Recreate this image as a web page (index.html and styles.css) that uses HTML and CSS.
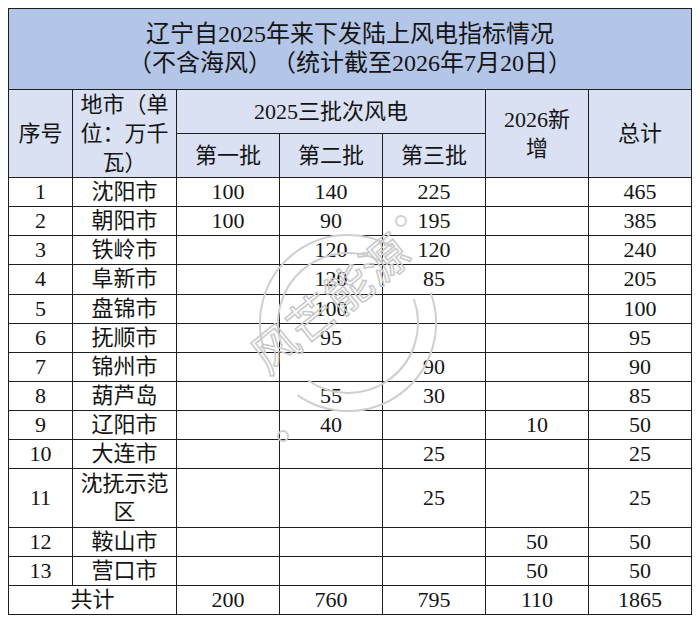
FILE: index.html
```html
<!DOCTYPE html>
<html lang="zh-CN">
<head>
<meta charset="utf-8">
<title>辽宁自2025年来下发陆上风电指标情况</title>
<link rel="stylesheet" href="styles.css">
</head>
<body>
<div class="wrap">
<table class="tbl">
<colgroup>
<col class="c-no"><col class="c-city"><col class="c-n"><col class="c-n"><col class="c-n"><col class="c-n"><col class="c-n">
</colgroup>
<thead>
<tr class="r-title"><th colspan="7" class="title">辽宁自2025年来下发陆上风电指标情况<br>（不含海风）（统计截至2026年7月20日）</th></tr>
<tr class="r-h1">
<th rowspan="2" class="hd">序号</th>
<th rowspan="2" class="hd">地市（单位：万千瓦）</th>
<th colspan="3" class="hd">2025三批次风电</th>
<th rowspan="2" class="hd">2026新<br>增</th>
<th rowspan="2" class="hd">总计</th>
</tr>
<tr class="r-h2">
<th class="hd">第一批</th><th class="hd">第二批</th><th class="hd">第三批</th>
</tr>
</thead>
<tbody>
<tr><td>1</td><td>沈阳市</td><td>100</td><td>140</td><td>225</td><td></td><td>465</td></tr>
<tr><td>2</td><td>朝阳市</td><td>100</td><td>90</td><td>195</td><td></td><td>385</td></tr>
<tr><td>3</td><td>铁岭市</td><td></td><td>120</td><td>120</td><td></td><td>240</td></tr>
<tr><td>4</td><td>阜新市</td><td></td><td>120</td><td>85</td><td></td><td>205</td></tr>
<tr><td>5</td><td>盘锦市</td><td></td><td>100</td><td></td><td></td><td>100</td></tr>
<tr><td>6</td><td>抚顺市</td><td></td><td>95</td><td></td><td></td><td>95</td></tr>
<tr><td>7</td><td>锦州市</td><td></td><td></td><td>90</td><td></td><td>90</td></tr>
<tr><td>8</td><td>葫芦岛</td><td></td><td>55</td><td>30</td><td></td><td>85</td></tr>
<tr><td>9</td><td>辽阳市</td><td></td><td>40</td><td></td><td>10</td><td>50</td></tr>
<tr><td>10</td><td>大连市</td><td></td><td></td><td>25</td><td></td><td>25</td></tr>
<tr class="r-tall"><td>11</td><td>沈抚示范区</td><td></td><td></td><td>25</td><td></td><td>25</td></tr>
<tr><td>12</td><td>鞍山市</td><td></td><td></td><td></td><td>50</td><td>50</td></tr>
<tr><td>13</td><td>营口市</td><td></td><td></td><td></td><td>50</td><td>50</td></tr>
<tr><td colspan="2">共计</td><td>200</td><td>760</td><td>795</td><td>110</td><td>1865</td></tr>
</tbody>
</table>
<svg class="watermark" width="260" height="260" viewBox="0 0 260 260" aria-hidden="true">
  <g fill="none" stroke="#cfcfcf" stroke-width="2">
    <path d="M27.3 155.1 A88 88 0 0 1 154 48.8"/>
    <path d="M192.7 94.9 A88 88 0 0 1 59.5 197.1"/>
    <path d="M44.2 148.9 A70 70 0 0 1 145 64.4"/>
    <path d="M175.8 101.1 A70 70 0 0 1 69.8 182.3"/>
    <circle cx="163" cy="23" r="5"/>
    <circle cx="45" cy="238" r="5"/>
  </g>
  <text x="0" y="0" transform="translate(30 178) rotate(-39)" class="wm-text">风芒能源</text>
</svg>
</div>
</body>
</html>
```
FILE: styles.css
```css
html, body {
  margin: 0;
  padding: 0;
  background: #ffffff;
}
body {
  padding: 8px;
  font-family: "Liberation Serif", "Noto Sans CJK SC", serif;
  color: #141414;
  text-spacing-trim: space-all;
}
.wrap {
  position: relative;
  width: 684px;
}
.tbl {
  border-collapse: collapse;
  table-layout: fixed;
  width: 684px;
  font-size: 22px;
  text-spacing-trim: space-all;
}
.c-no { width: 64px; }
.c-city { width: 104px; }
.c-n { width: 103px; }
.tbl th, .tbl td {
  border: 1px solid #1e1e1e;
  padding: 0 4px;
  text-align: center;
  vertical-align: middle;
  font-weight: 400;
  line-height: 29px;
}
.tbl td {
  height: 28.15px;
  line-height: 28px;
}
.tbl .r-tall td {
  height: 57.3px;
}
.title {
  background: #b4c6e7;
  font-size: 24px;
  line-height: 29px;
  height: 80px;
}
.hd {
  background: #d9e1f2;
}
.r-h1 th { height: 43px; }
.r-h2 th { height: 43px; }
.watermark {
  position: absolute;
  left: 230px;
  top: 190px;
  overflow: visible;
  pointer-events: none;
}
.wm-text {
  font-family: "Noto Sans CJK SC", sans-serif;
  font-size: 46px;
  fill: none;
  stroke: #c8c8c8;
  stroke-width: 1.5;
  letter-spacing: 1px;
}
```
